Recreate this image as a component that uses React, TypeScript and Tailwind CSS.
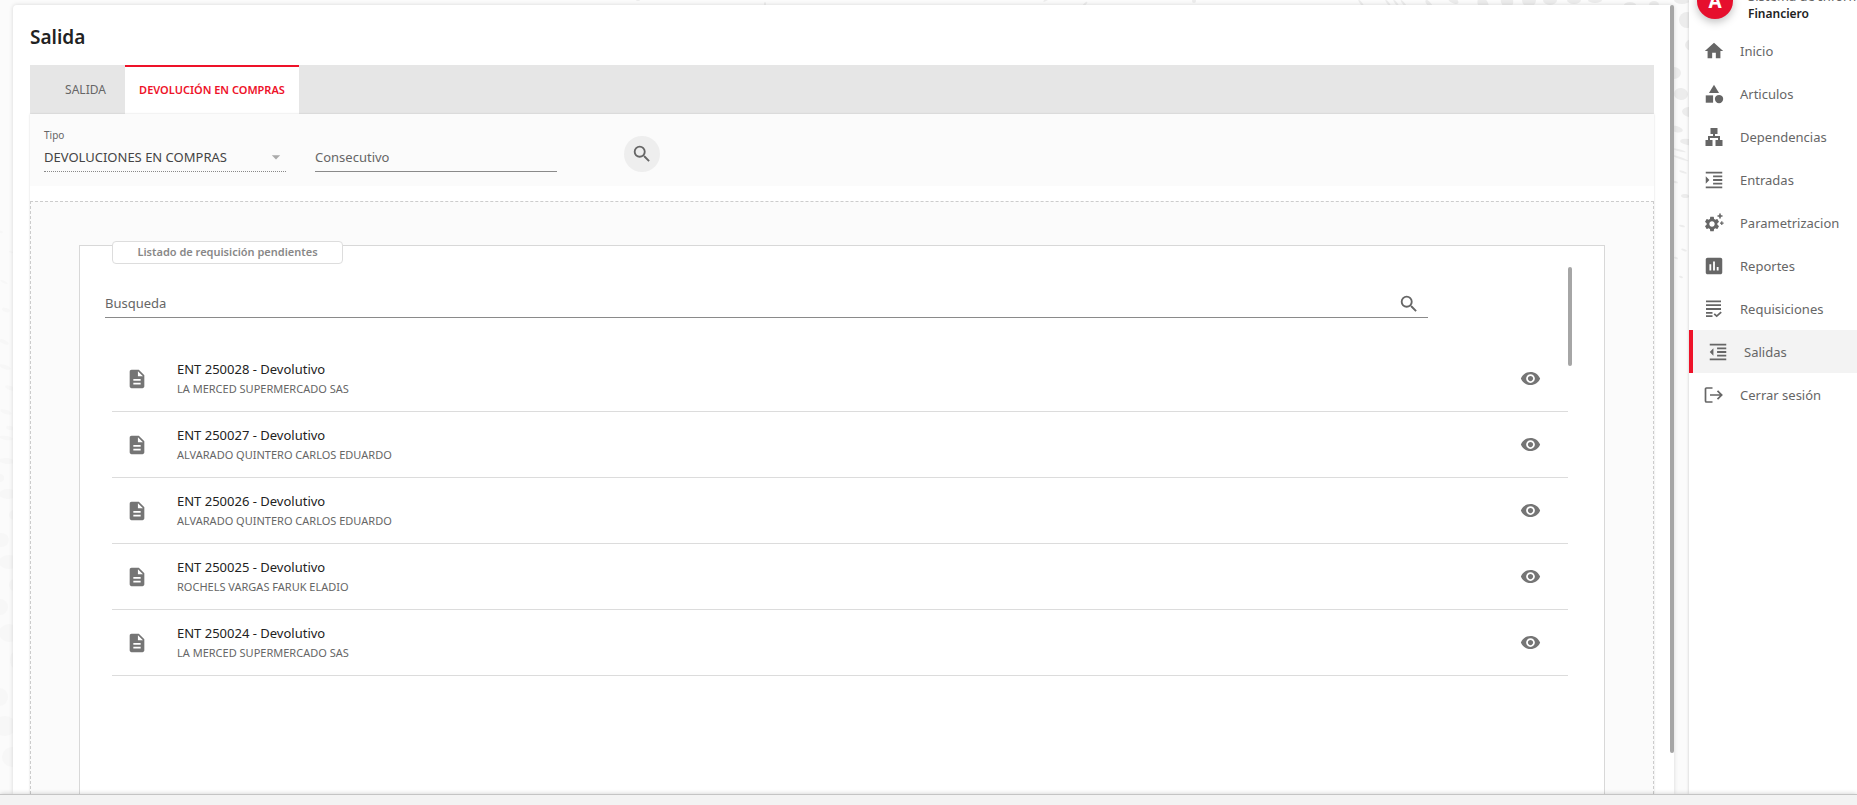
import React from "react";
import type { ReactNode } from "react";
import {
  MdHome, MdCategory, MdFormatIndentIncrease, MdFormatIndentDecrease, MdAssessment,
  MdDescription, MdVisibility, MdSearch, MdArrowDropDown, MdSettings,
} from "react-icons/md";

const entries = [
  { code: "ENT 250028 - Devolutivo", name: "LA MERCED SUPERMERCADO SAS" },
  { code: "ENT 250027 - Devolutivo", name: "ALVARADO QUINTERO CARLOS EDUARDO" },
  { code: "ENT 250026 - Devolutivo", name: "ALVARADO QUINTERO CARLOS EDUARDO" },
  { code: "ENT 250025 - Devolutivo", name: "ROCHELS VARGAS FARUK ELADIO" },
  { code: "ENT 250024 - Devolutivo", name: "LA MERCED SUPERMERCADO SAS" },
];

function OrgIcon() {
  return (
    <svg viewBox="0 0 22 22" className="size-[22px]" fill="currentColor">
      <path d="M7.500 2h7v6h-2.500v2h5v4h2.500v6h-7v-6H15v-2H7v2h2.500v6h-7v-6H5v-4h5V8H7.500z" />
    </svg>
  );
}

function SettingsIcon() {
  return (
    <svg viewBox="0 0 22 22" className="size-[22px] overflow-visible" fill="currentColor">
      <MdSettings x="0" y="3" size={18} />
      <path d="M14.500 3.200h1.700V1.500h1.600v1.700h1.700v1.600h-1.700v1.700h-1.600V4.800h-1.700zM17 10.500h1.200V9.300h1.200v1.200h1.200v1.200h-1.200v1.200h-1.200v-1.200H17z" />
    </svg>
  );
}

function ChecklistIcon() {
  return (
    <svg viewBox="0 0 22 22" className="size-[22px]" fill="currentColor">
      <path d="M3 2.500h15v1.800H3zM3 6.300h15v1.800H3zM3 10.100h15v1.800H3zM3 13.900h6.500v1.800H3zM3 17.200h6.500V19H3z" />
      <path d="M11.200 15.800l2.500 2.300 4.500-4" fill="none" stroke="currentColor" strokeWidth="1.800" />
    </svg>
  );
}

function ExitIcon() {
  return (
    <svg viewBox="0 0 22 22" className="size-[22px]" fill="none" stroke="currentColor" strokeWidth="1.700">
      <path d="M9.500 4H3.500Q2.500 4 2.500 5v12Q2.500 18 3.500 18h6M7 11h11.500M14.500 6.800L18.700 11l-4.200 4.200" />
    </svg>
  );
}

const nav: { label: string; icon: ReactNode; active?: boolean }[] = [
  { label: "Inicio", icon: <MdHome className="size-[22px]" /> },
  { label: "Articulos", icon: <MdCategory className="size-[22px]" /> },
  { label: "Dependencias", icon: <OrgIcon /> },
  { label: "Entradas", icon: <MdFormatIndentIncrease className="size-[22px]" /> },
  { label: "Parametrizacion", icon: <SettingsIcon /> },
  { label: "Reportes", icon: <MdAssessment className="size-[22px]" /> },
  { label: "Requisiciones", icon: <ChecklistIcon /> },
  { label: "Salidas", icon: <MdFormatIndentDecrease className="size-[22px]" />, active: true },
  { label: "Cerrar sesión", icon: <ExitIcon /> },
];

/* [cx, cy, rx, ry, rotation] */
const rightDots = [
  [22, 0, 8, 4, 0], [27, 20, 8, 8, 0], [33, 45, 8, 6, 0], [14, 73, 7, 6, 0],
  [21, 94, 7, 6, 5], [30, 112, 8, 5, 5], [16, 129, 7, 3, 15], [28, 142, 8, 3, 8],
  [18, 150, 8, 1, 14], [20, 158, 9, 1, 20], [23, 172, 4, 1, 20], [15, 182, 3, 1, 15],
  [25, 196, 4, 2, 8], [22, 226, 3, 1, 15], [24, 250, 3, 1, 20], [16, 258, 2, 1, 20],
  [21, 277, 2, 1, 15],
];
const leftDots = [
  [1, 232, 2, 1, 15], [11, 252, 2, 1, 15], [4, 282, 4, 1, 25], [6, 310, 4, 2, 20],
  [4, 342, 5, 2, 25], [5, 367, 6, 2, 20], [10, 388, 5, 2, 20], [6, 412, 6, 2, 18],
  [10, 428, 4, 2, 15], [6, 438, 7, 2, 10], [7, 461, 8, 3, 5], [0, 478, 4, 4, 0],
  [8, 494, 9, 5, 0], [14, 515, 5, 5, 0], [1, 540, 8, 7, 0], [9, 562, 10, 7, 0],
  [14, 585, 5, 6, 0], [0, 607, 8, 8, 0], [9, 633, 10, 9, 0], [14, 660, 4, 8, 0],
  [12, 757, 10, 10, 0], [0, 697, 8, 9, 0], [5, 726, 11, 10, 0],
];
const topDots = [
  [638, 0, 2, 1, 0], [765, 4, 1, 2, 0], [1046, 0, 3, 1, -30], [1085, 4, 3, 1, -40],
  [1194, 1, 2, 2, 0], [1361, 3, 4, 1, 50], [1388, 3, 4, 1, 50], [1396, 3, 4, 1, 50],
  [1404, 4, 5, 1, 50], [1429, 4, 5, 2, 50], [1453, 0, 6, 3, 30], [1483, 4, 7, 5, 60],
  [1507, 1, 7, 6, 60], [1529, 0, 7, 7, 0], [1550, 0, 7, 5, 0], [1574, 0, 7, 4, 0],
  [1595, 0, 7, 3, 0], [1630, 5, 6, 3, 0], [1654, 5, 5, 4, 0],
];

function Dots({ dots, fill }: { dots: number[][]; fill: string }) {
  return (
    <g fill={fill}>
      {dots.map(([x, y, rx, ry, a], i) => (
        <ellipse key={i} cx={x} cy={y} rx={rx} ry={ry} transform={`rotate(${a} ${x} ${y})`} />
      ))}
    </g>
  );
}

function Backdrop() {
  return (
    <div aria-hidden className="pointer-events-none absolute inset-0 overflow-hidden">
      <svg className="absolute left-0 top-0 h-full w-4"><Dots dots={leftDots} fill="#f7f7f7" /></svg>
      <svg className="absolute left-0 top-0 h-2 w-full"><Dots dots={topDots} fill="#ececec" /></svg>
      <svg className="absolute right-0 top-0 h-[300px] w-[29px]"><Dots dots={rightDots} fill="#ececec" /></svg>
    </div>
  );
}

export default function App() {
  return (
    <div className="flex h-screen flex-col overflow-hidden bg-[#fbfbfb] font-['Noto_Sans',sans-serif] text-[13px] leading-[18px] text-[#666]">
      <div className="flex min-h-0 flex-1 overflow-hidden">
        <main className="relative flex min-w-0 flex-1 pl-[13px] pr-[15px] pt-[5px]">
          <Backdrop />
          <section className="relative flex min-w-0 flex-1 flex-col rounded-t bg-white pl-[17px] pr-5 shadow-[0_0_4px_rgba(0,0,0,0.15)]">
            <h1 className="pb-[14px] pt-[18px] text-[19px] font-semibold leading-[28px] text-[#222]">Salida</h1>

            <div role="tablist" className="flex h-[49px] shrink-0 bg-[#e6e6e6] text-[#666]">
              <button role="tab" aria-selected="false" className="w-[95px] pl-4 text-[12px]">SALIDA</button>
              <button role="tab" aria-selected="true" className="w-[174px] border-t-2 border-[#ee1229] bg-white pb-0.5 text-[11px] font-semibold text-[#ee1229]">
                DEVOLUCIÓN EN COMPRAS
              </button>
            </div>

            <div className="flex min-h-0 flex-1 flex-col shadow-[0_0_2px_rgba(0,0,0,0.15)]">
              <form className="flex h-[72px] shrink-0 items-start gap-[29px] bg-[#fbfbfb] px-[14px] pt-3" onSubmit={(e) => e.preventDefault()}>
                <div className="flex w-[242px] flex-col">
                  <label htmlFor="tipo" className="text-[10px] leading-[18px]">Tipo</label>
                  <div className="relative flex">
                    <select id="tipo" className="h-[28px] w-full appearance-none border-b border-dotted border-[#888] bg-transparent pb-0.5 text-[13px] text-[#444] outline-none">
                      <option>DEVOLUCIONES EN COMPRAS</option>
                    </select>
                    <MdArrowDropDown className="pointer-events-none absolute right-0 top-[3px] size-5 text-[#aaa]" />
                  </div>
                </div>
                <input aria-label="Consecutivo" placeholder="Consecutivo" className="mt-[18px] h-[28px] w-[242px] border-b border-[#8a8a8a] bg-transparent pb-0.5 outline-none placeholder:text-[#666]" />
                <button aria-label="Buscar" className="ml-[38px] mt-[10px] flex size-9 items-center justify-center rounded-full bg-[#eee] text-[#666]">
                  <MdSearch className="size-[22px]" />
                </button>
              </form>

              <div className="mt-[15px] min-h-0 flex-1 border border-b-0 border-dashed border-[#ccc] bg-[#fbfbfb] px-12 pt-[43px]">
                <section aria-labelledby="listado" className="relative h-full border border-b-0 border-[#d8d8d8] bg-white">
                  <h2 id="listado" className="relative -mt-[5px] ml-8 w-[231px] rounded border border-[#ddd] bg-white pb-px text-center text-[11px] font-semibold leading-[20px] text-[#888]">
                    Listado de requisición pendientes
                  </h2>
                  <div className="pl-[25px] pr-9 pt-[26px]">
                    <div className="mr-[140px] flex h-[28px] items-center border-b border-[#8a8a8a]">
                      <input aria-label="Busqueda" placeholder="Busqueda" className="min-w-0 flex-1 bg-transparent pb-0.5 outline-none placeholder:text-[#666]" />
                      <MdSearch className="mr-2 size-[22px]" />
                    </div>
                    <ul className="ml-[7px] pt-7">
                      {entries.map((e) => (
                        <li key={e.code} className="flex h-[66px] items-center border-b border-[#dcdcdc] pl-[14px] pr-[27px] text-[#757575]">
                          <MdDescription className="size-[22px]" />
                          <div className="ml-[29px] flex-1">
                            <p className="text-[13px] leading-5 text-[#222]">{e.code}</p>
                            <p className="text-[11px] leading-5 text-[#666]">{e.name}</p>
                          </div>
                          <button aria-label={`Ver ${e.code}`}><MdVisibility className="size-[21px]" /></button>
                        </li>
                      ))}
                    </ul>
                  </div>
                  <div aria-hidden className="absolute right-8 top-[21px] h-[99px] w-1 rounded-full bg-[#a6a6a6]" />
                </section>
              </div>
            </div>
            <div aria-hidden className="absolute bottom-[41px] right-0 top-0 w-1 rounded-full bg-[#a6a6a6]" />
          </section>
        </main>

        <aside className="relative w-[168px] shrink-0 overflow-hidden bg-white shadow-[0_0_3px_rgba(0,0,0,0.2)]">
          <div className="-mt-[17px] flex h-[46px] items-start pl-2">
            <div className="flex size-9 shrink-0 items-center justify-center rounded-full bg-[#e60f2d] text-[19px] font-bold text-white shadow-[0_3px_8px_rgba(0,0,0,0.25)]">A</div>
            <div className="ml-[15px] whitespace-nowrap pt-[5px] leading-[17px]">
              <p className="text-[13px]">Sistema de Información</p>
              <p className="text-[12px] font-semibold text-[#222]">Financiero</p>
            </div>
          </div>
          <nav>
            {nav.map((n) => (
              <a
                key={n.label}
                href="#"
                aria-current={n.active ? "page" : undefined}
                className={
                  n.active
                    ? "flex h-[43px] items-center gap-[15px] border-l-4 border-[#ee1229] bg-[#f3f3f3] pl-[14px]"
                    : "flex h-[43px] items-center gap-[15px] pl-[14px]"
                }
              >
                {n.icon}
                <span>{n.label}</span>
              </a>
            ))}
          </nav>
        </aside>
      </div>
      <footer className="relative h-[11px] shrink-0 border-t border-[#c4c4c4] bg-[#f3f3f3] shadow-[0_0_5px_rgba(0,0,0,0.2)]" />
    </div>
  );
}
